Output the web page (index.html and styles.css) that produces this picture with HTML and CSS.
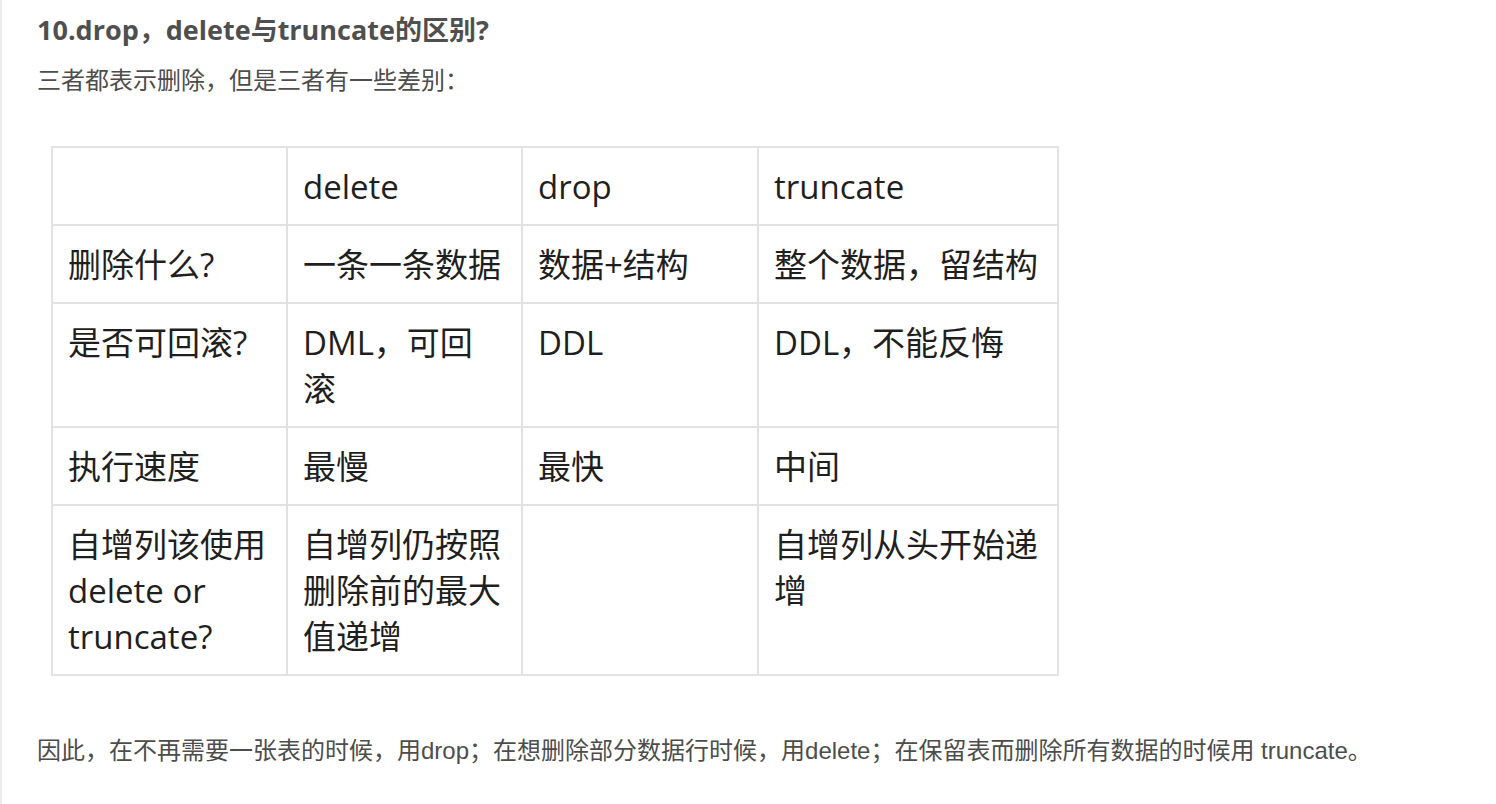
FILE: index.html
```html
<!DOCTYPE html>
<html lang="zh-CN">
<head>
<meta charset="utf-8">
<title>drop, delete与truncate的区别</title>
<link rel="stylesheet" href="styles.css">
</head>
<body>
<main class="article">
  <h4 class="title">10.drop，delete与truncate的区别?</h4>
  <p class="text">三者都表示删除，但是三者有一些差别：</p>
  <table class="compare">
    <colgroup>
      <col class="c1"><col class="c2"><col class="c3"><col class="c4">
    </colgroup>
    <tbody>
      <tr><td></td><td>delete</td><td>drop</td><td>truncate</td></tr>
      <tr><td>删除什么?</td><td>一条一条数据</td><td>数据+结构</td><td>整个数据，留结构</td></tr>
      <tr><td>是否可回滚?</td><td>DML，可回<br>滚</td><td>DDL</td><td>DDL，不能反悔</td></tr>
      <tr><td>执行速度</td><td>最慢</td><td>最快</td><td>中间</td></tr>
      <tr><td>自增列该使用delete or truncate?</td><td>自增列仍按照删除前的最大值递增</td><td></td><td>自增列从头开始递增</td></tr>
    </tbody>
  </table>
  <p class="text text-last">因此，在不再需要一张表的时候，用drop；在想删除部分数据行时候，用delete；在保留表而删除所有数据的时候用 truncate。</p>
</main>
</body>
</html>
```

FILE: styles.css
```css
html, body {
  margin: 0;
  padding: 0;
  background: #ffffff;
}

body {
  height: 804px;
  border-left: 2px solid #ececec;
  box-sizing: border-box;
}

.article {
  padding: 14px 0 0 35px;
}

.title {
  margin: 0;
  font-family: "Open Sans", "Noto Sans CJK SC", sans-serif;
  font-weight: 700;
  font-size: 27px;
  line-height: 32px;
  color: #4f4f4f;
}

.text {
  margin: 17px 0 0;
  font-family: "Liberation Sans", "Noto Sans CJK SC", sans-serif;
  font-size: 24px;
  line-height: 36px;
  color: #4d4d4d;
}

.text-last {
  margin-top: 57px;
}

.compare {
  margin: 47px 0 0 14px;
  border-collapse: collapse;
  table-layout: fixed;
  width: 1006px;
  font-family: "Open Sans", "Noto Sans CJK SC", sans-serif;
  font-size: 33px;
  line-height: 46px;
  color: #1f1f1f;
}

.c1, .c2 { width: 235px; }
.c3 { width: 236px; }
.c4 { width: 300px; }

.compare td {
  border: 2px solid #e2e2e2;
  padding: 16px 14px 14px 15px;
  vertical-align: top;
}
```
